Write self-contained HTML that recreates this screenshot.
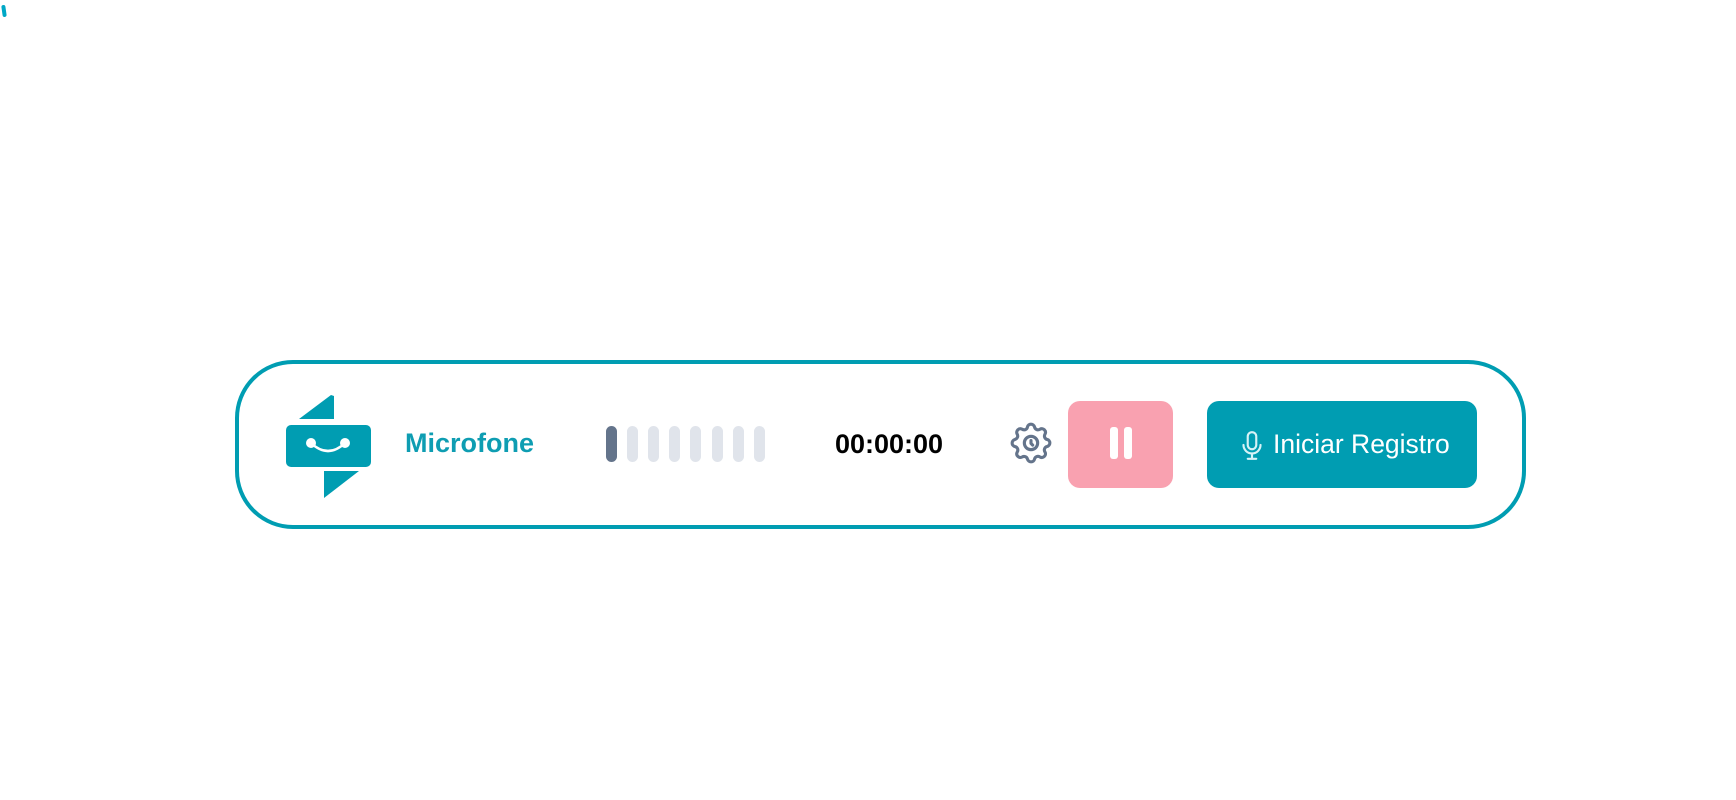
<!DOCTYPE html>
<html><head><meta charset="utf-8"><style>
body{margin:0;width:1736px;height:800px;background:#fff;position:relative;overflow:hidden;font-family:"Liberation Sans",Arial,sans-serif}
.a{position:absolute}
#box{left:235px;top:360px;width:1283px;height:161px;border:4.5px solid #009db2;border-radius:58px}
.bar{position:absolute;top:426px;width:11px;height:36px;border-radius:6px;background:#e0e4eb}
</style></head><body>
<div class="a" style="left:2px;top:5px;width:4px;height:12px;background:#00a8c6;border-radius:2px;transform:rotate(-8deg)"></div>
<div class="a" id="box"></div>
<svg class="a" style="left:284px;top:393px" width="90" height="108" viewBox="0 0 90 108">
<polygon points="15,26 47,2 50,3 50,26" fill="#009db2"/>
<rect x="2" y="32" width="85" height="42" rx="5" fill="#009db2"/>
<circle cx="27" cy="50" r="5" fill="#fff"/><circle cx="61" cy="50" r="5" fill="#fff"/>
<path d="M27 50 Q44 66 61 50" stroke="#fff" stroke-width="2.5" fill="none"/>
<polygon points="40,78 75,78 40,105" fill="#009db2"/>
</svg>
<div class="a" style="left:405px;top:428px;font-size:27px;font-weight:bold;color:#0e9db2">Microfone</div>
<div class="bar" style="left:606px;background:#64748b"></div>
<div class="bar" style="left:627px"></div><div class="bar" style="left:648px"></div><div class="bar" style="left:669px"></div><div class="bar" style="left:690px"></div><div class="bar" style="left:712px"></div><div class="bar" style="left:733px"></div><div class="bar" style="left:754px"></div>
<div class="a" style="left:810px;width:158px;text-align:center;top:429px;font-size:27px;font-weight:bold;color:#000">00:00:00</div>
<svg class="a" style="left:1006px;top:418px" width="50" height="50" viewBox="0 0 24 24" fill="none" stroke="#64748b" stroke-width="1.5" stroke-linecap="round" stroke-linejoin="round">
<path d="M10.3 4.3c.4-1.8 2.9-1.8 3.4 0a1.7 1.7 0 0 0 2.6 1.1c1.5-.9 3.3.8 2.4 2.4a1.7 1.7 0 0 0 1 2.5c1.8.4 1.8 2.9 0 3.4a1.7 1.7 0 0 0-1 2.6c.9 1.5-.8 3.300-2.4 2.4a1.7 1.7 0 0 0-2.6 1c-.4 1.8-2.9 1.8-3.4 0a1.7 1.7 0 0 0-2.5-1c-1.5.9-3.3-.8-2.4-2.4a1.7 1.7 0 0 0-1.1-2.6c-1.8-.4-1.8-2.9 0-3.4a1.7 1.7 0 0 0 1.1-2.5c-.9-1.5.8-3.3 2.4-2.4 1 .6 2.3.1 2.5-1.1z"/>
<circle cx="12" cy="12" r="3.2"/><path d="M12 10.8v1.4l.8.8"/>
</svg>
<div class="a" style="left:1068px;top:401px;width:105px;height:87px;border-radius:12px;background:#f9a1b0"></div>
<div class="a" style="left:1110px;top:427px;width:8px;height:32px;border-radius:3px;background:#fff"></div>
<div class="a" style="left:1124px;top:427px;width:8px;height:32px;border-radius:3px;background:#fff"></div>
<div class="a" style="left:1207px;top:401px;width:270px;height:87px;border-radius:12px;background:#009db2"></div>
<svg class="a" style="left:1239px;top:430px" width="26" height="32" viewBox="0 0 24 30" fill="none" stroke="#d6f2f6" stroke-width="2" stroke-linecap="round">
<rect x="8" y="2" width="8" height="16" rx="4"/><path d="M4 14a8 8 0 0 0 16 0M12 22v5M8 27h8"/>
</svg>
<div class="a" style="left:1273px;top:429px;font-size:26.5px;color:#fff">Iniciar Registro</div>
</body></html>
